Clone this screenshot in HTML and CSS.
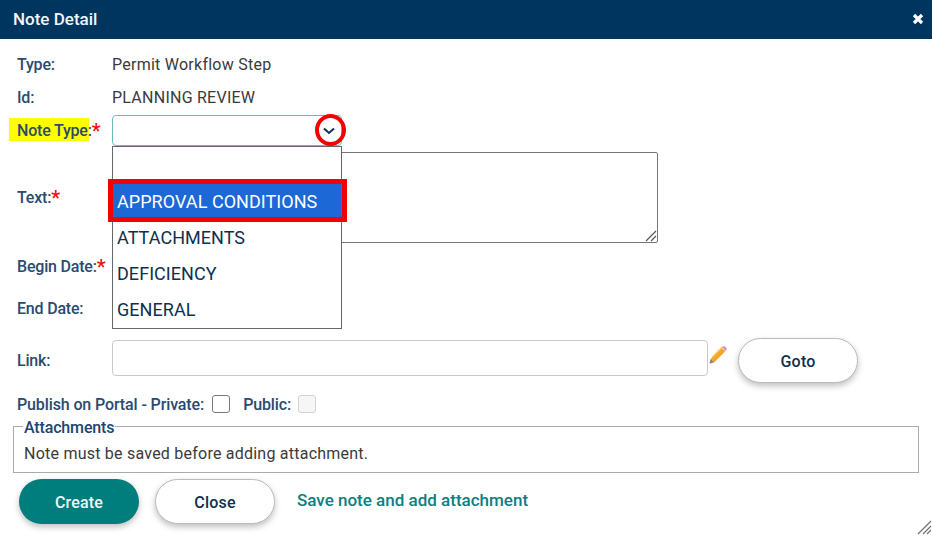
FILE: index.html
```html
<!DOCTYPE html>
<html lang="en">

<head>
    <meta charset="UTF-8">
    <title>Note Detail</title>
    <link rel="stylesheet" href="styles.css">
</head>

<body>
    <div class="dialog">
        <div class="title-bar">
            <span>Note Detail</span>
            <svg class="close-icon" width="12" height="12" viewBox="0 0 12 12">
                <path d="M2 2L10 10M10 2L2 10" stroke="#fff" stroke-width="3.2" />
            </svg>
        </div>
        <div class="form">
            <div class="row row-type">
                <label>Type:</label>
                <span class="value">Permit Workflow Step</span>
            </div>
            <div class="row row-id">
                <label>Id:</label>
                <span class="value">PLANNING REVIEW</span>
            </div>
            <div class="row row-note-type">
                <label><span class="highlight">Note Type:</span><span class="req">*</span></label>
                <div class="select-wrap">
                    <div class="select-box"></div>
                    <svg class="chevron" width="14" height="8" viewBox="0 0 14 8">
                        <path d="M2 1.5L7 6L12 1.5" fill="none" stroke="#14304f" stroke-width="2" />
                    </svg>
                    <div class="red-circle"></div>
                    <div class="dropdown">
                        <div class="option"></div>
                        <div class="option selected">APPROVAL CONDITIONS</div>
                        <div class="option">ATTACHMENTS</div>
                        <div class="option">DEFICIENCY</div>
                        <div class="option">GENERAL</div>
                    </div>
                    <div class="red-box"></div>
                </div>
            </div>
            <div class="row row-text">
                <label>Text:<span class="req">*</span></label>
                <div class="textarea">
                    <svg class="grip" width="12" height="12" viewBox="0 0 12 12">
                        <path d="M1 11L11 1M6 11L11 6" stroke="#555" stroke-width="1.2" />
                    </svg>
                </div>
            </div>
            <div class="row row-begin">
                <label>Begin Date:<span class="req">*</span></label>
            </div>
            <div class="row row-end">
                <label>End Date:</label>
            </div>
            <div class="row row-link">
                <label>Link:</label>
                <div class="link-input"></div>
                <svg class="pencil" width="20" height="20" viewBox="0 0 22 22">
                    <path d="M3 15L15 3L19 7L7 19Z" fill="#f5a623" />
                    <path d="M5 13L16 2" stroke="#fbc96b" stroke-width="1.5" />
                    <path d="M15.5 2.5L17 1.5Q18 1 19 2L20 3Q21 4 20.4 5L19.5 6.5Z" fill="#d98ac4" />
                    <path d="M3 15L7 19L1.5 20.5Z" fill="#8c8172" />
                </svg>
                <button class="btn btn-white btn-goto">Goto</button>
            </div>
            <div class="row row-publish">
                <span class="publish-label">Publish on Portal - Private:</span>
                <span class="check"></span>
                <span class="publish-label public-label">Public:</span>
                <span class="check check-off"></span>
            </div>
            <div class="attachments">
                <div class="legend">Attachments</div>
                <div class="attach-note">Note must be saved before adding attachment.</div>
            </div>
            <div class="actions">
                <button class="btn btn-teal">Create</button>
                <button class="btn btn-white">Close</button>
                <span class="save-link">Save note and add attachment</span>
            </div>
        </div>
        <svg class="resize" width="16" height="16" viewBox="0 0 16 16">
            <path d="M2 15L15 2M7 15L15 7M11 15L15 11" stroke="#777" stroke-width="1.3" />
        </svg>
    </div>
</body>

</html>
```
FILE: styles.css
```css
body {
    margin: 0;
    background-color: #fff;
    font-family: Roboto, "Liberation Sans", sans-serif;
    font-size: 16px;
    color: #3a3a3a;
}

.dialog {
    position: relative;
    width: 932px;
    height: 536px;
    overflow: hidden;
}

.title-bar {
    display: flex;
    justify-content: space-between;
    align-items: center;
    box-sizing: border-box;
    height: 39px;
    padding: 0 8px 2px 13px;
    background-color: #00355f;
    color: #f2f5f8;
    font-size: 17px;
    font-weight: 500;
}

.close-icon {
    display: block;
}

.form {
    padding: 0 13px;
}

.row {
    display: flex;
    align-items: flex-start;
}

.row label {
    flex: none;
    width: 95px;
    padding-left: 4px;
    color: #2b4a6f;
    font-weight: 500;
    letter-spacing: -0.2px;
    line-height: 20px;
}

.value {
    letter-spacing: 0.25px;
    line-height: 20px;
}

.row-type {
    height: 33px;
    padding-top: 16px;
}

.row-id {
    height: 27px;
}

.row-note-type {
    height: 37px;
}

.row-note-type label {
    padding-top: 6px;
}

.highlight {
    position: relative;
    z-index: 0;
}

.highlight::before {
    content: "";
    position: absolute;
    z-index: -1;
    left: -8px;
    top: -3px;
    width: 80px;
    height: 23px;
    background-color: #ffff00;
}

.req {
    color: #f01010;
    font-size: 20px;
    line-height: 16px;
    vertical-align: -2px;
}

.select-wrap {
    position: relative;
    width: 230px;
    height: 31px;
}

.select-box {
    box-sizing: border-box;
    height: 31px;
    border: 1px solid #6fb9bd;
    border-radius: 4px;
}

.chevron {
    position: absolute;
    left: 210px;
    top: 12px;
}

.red-circle {
    position: absolute;
    left: 203px;
    top: -1px;
    box-sizing: border-box;
    width: 31px;
    height: 32px;
    border: 4px solid #f50000;
    border-radius: 50%;
}

.dropdown {
    position: absolute;
    z-index: 2;
    left: 0;
    top: 31px;
    box-sizing: border-box;
    width: 230px;
    height: 183px;
    padding-top: 1px;
    border: 1px solid #666;
    background-color: #fff;
}

.option {
    height: 36px;
    padding-left: 4px;
    color: #0f2f4f;
    font-size: 18px;
    letter-spacing: 0.05px;
    line-height: 36px;
}

.option.selected {
    background-color: #1b68d6;
    color: #fff;
}

.red-box {
    position: absolute;
    z-index: 3;
    left: -4px;
    top: 64px;
    box-sizing: border-box;
    width: 239px;
    height: 43px;
    border: 5px solid #f50000;
}

.row-text {
    height: 91px;
    margin-bottom: 14px;
}

.row-text label {
    padding-top: 36px;
}

.textarea {
    position: relative;
    box-sizing: border-box;
    width: 546px;
    height: 91px;
    border: 1px solid #767676;
    border-radius: 2px;
}

.grip {
    position: absolute;
    right: 0;
    bottom: 0;
}

.row-begin {
    height: 42px;
}

.row-end {
    height: 41px;
}

.row-link {
    height: 52px;
}

.row-link label {
    padding-top: 11px;
}

.link-input {
    box-sizing: border-box;
    width: 596px;
    height: 36px;
    border: 1px solid #c8c8c8;
    border-radius: 4px;
}

.pencil {
    flex: none;
    margin-top: 5px;
}

.btn {
    height: 45px;
    padding-top: 3px;
    border-radius: 23px;
    font-family: inherit;
    font-size: 16px;
    font-weight: 500;
    letter-spacing: 0.2px;
    box-shadow: 0 3px 6px rgba(0, 0, 0, 0.25);
}

.btn-white {
    width: 120px;
    border: 1px solid #bbb;
    background-color: #fff;
    color: #0d2f4f;
}

.btn-teal {
    width: 120px;
    border: none;
    background-color: #007d7d;
    color: #f0f8f8;
}

.btn-goto {
    margin: -2px 0 0 10px;
}

.row-publish {
    align-items: center;
    height: 24px;
    padding-left: 4px;
}

.publish-label {
    color: #2b4a6f;
    font-weight: 500;
    letter-spacing: -0.12px;
}

.check {
    box-sizing: border-box;
    width: 18px;
    height: 18px;
    margin-left: 8px;
    border: 1px solid #767676;
    border-radius: 3px;
}

.check-off {
    margin-left: 7px;
    border-color: #d4d4d4;
    background-color: #f6f6f6;
}

.public-label {
    margin-left: 13px;
}

.attachments {
    position: relative;
    box-sizing: border-box;
    width: 906px;
    height: 47px;
    margin-top: 10px;
    border: 1px solid #aaa;
    padding: 17px 0 0 10px;
    letter-spacing: 0.23px;
    line-height: 20px;
}

.legend {
    position: absolute;
    left: 9px;
    top: -9px;
    padding: 0 1px;
    background-color: #fff;
    color: #1c4470;
    font-weight: 500;
    letter-spacing: -0.15px;
    line-height: 20px;
}

.actions {
    display: flex;
    align-items: flex-start;
    margin: 6px 0 0 6px;
}

.actions .btn-white {
    margin-left: 16px;
}

.save-link {
    margin: 11px 0 0 22px;
    color: #0a8080;
    font-size: 17px;
    font-weight: 500;
    line-height: 20px;
}

.resize {
    position: absolute;
    right: 0;
    bottom: 1px;
}
```
